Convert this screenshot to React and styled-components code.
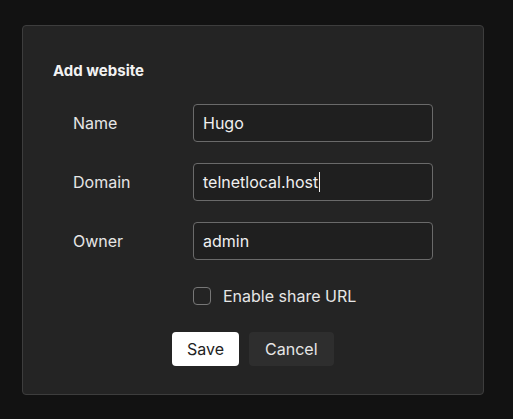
import React from "react";
import styled, { createGlobalStyle } from "styled-components";

const Global = createGlobalStyle`
  html, body { margin: 0; background: #121212; font-family: Inter, "Noto Sans", sans-serif; }
`;
const Page = styled.div`padding: 25px 29px 24px 22px;`;
const Card = styled.div`
  width: 462px; height: 370px; box-sizing: border-box;
  background: #242424; border: 1px solid #3d3d3d; border-radius: 4px;
  padding: 34px 0 0 30px; color: #eaeaea;
`;
const Title = styled.div`font-size: 15px; font-weight: 700; color: #f2f2f2; line-height: 22px; margin-bottom: 22px;`;
const Form = styled.div`display: flex; flex-direction: column; gap: 21px; padding-left: 20px;`;
const Row = styled.div`display: grid; grid-template-columns: 120px 240px; align-items: center;`;
const Label = styled.div`font-size: 16px; color: #e6e6e6;`;
const Input = styled.div`
  height: 38px; box-sizing: border-box; border: 1px solid #6a6a6a; border-radius: 4px;
  background: #1f1f1f; display: flex; align-items: center; padding-left: 9px;
  font-size: 16px; color: #f0f0f0;
`;
const Caret = styled.span`display: inline-block; width: 1px; height: 20px; background: #f0f0f0; margin-left: 1px;`;
const Check = styled.label`display: flex; align-items: center; gap: 12px; margin: 5px 0 0 120px; font-size: 16px; color: #e6e6e6;`;
const Box = styled.span`width: 18px; height: 18px; box-sizing: border-box; border: 1px solid #777; border-radius: 4px;`;
const Buttons = styled.div`display: flex; gap: 10px; margin: 5px 0 0 99px;`;
const Button = styled.button`
  height: 34px; border: none; border-radius: 4px; padding: 0 ${p => p.$primary ? 15 : 16}px;
  font: 16px Inter, sans-serif;
  background: ${p => p.$primary ? "#ffffff" : "#2e2e2e"};
  color: ${p => p.$primary ? "#222" : "#e6e6e6"};
`;

export default function App() {
  return (
    <Page>
      <Global />
      <Card>
        <Title>Add website</Title>
        <Form>
          <Row><Label>Name</Label><Input>Hugo</Input></Row>
          <Row><Label>Domain</Label><Input>telnetlocal.host<Caret /></Input></Row>
          <Row><Label>Owner</Label><Input>admin</Input></Row>
          <Check><Box />Enable share URL</Check>
          <Buttons>
            <Button $primary>Save</Button>
            <Button>Cancel</Button>
          </Buttons>
        </Form>
      </Card>
    </Page>
  );
}
